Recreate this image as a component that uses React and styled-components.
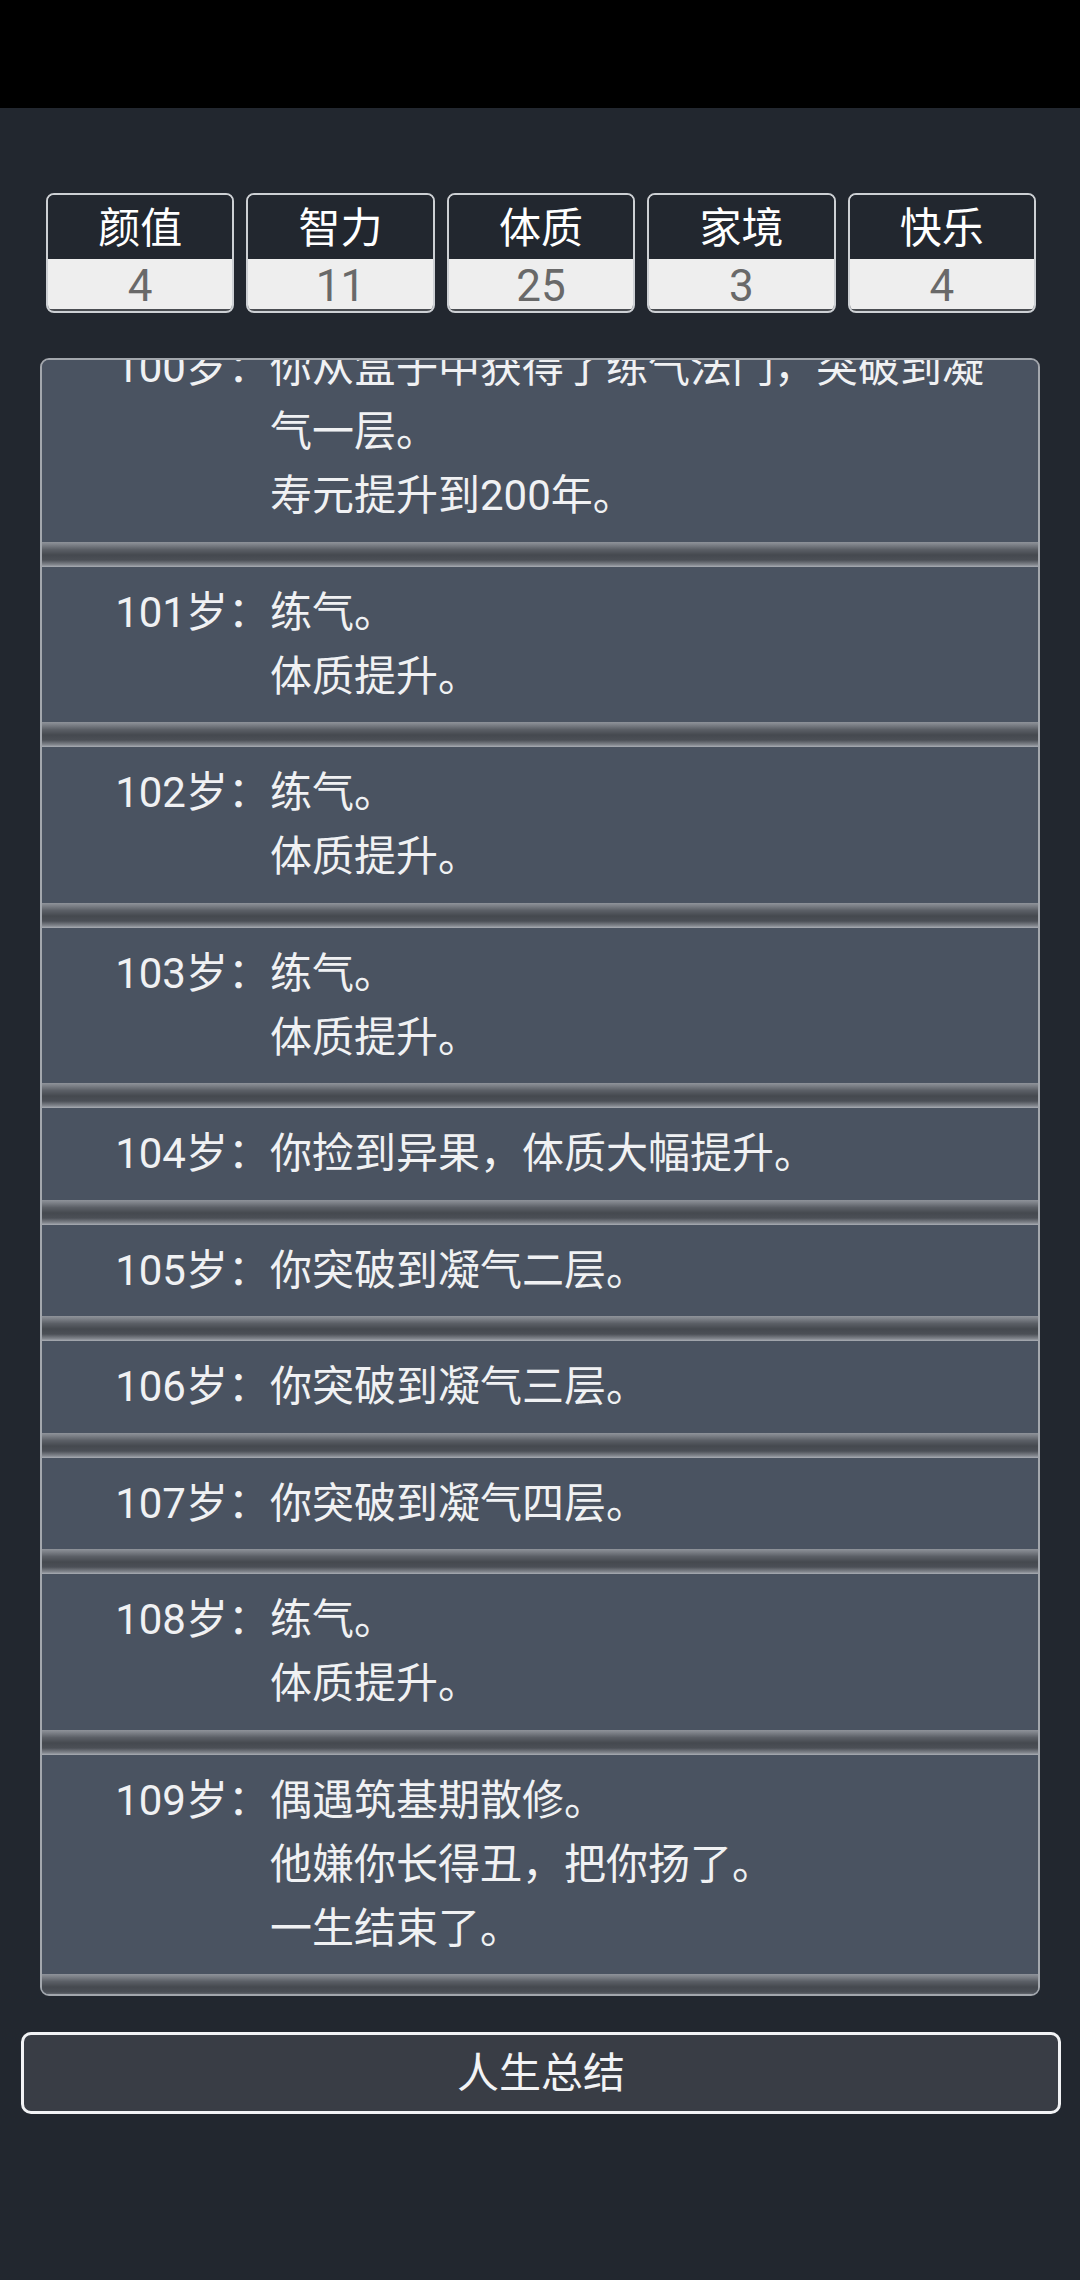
import React from "react";
import styled, { createGlobalStyle } from "styled-components";

const GlobalStyle = createGlobalStyle`
  html, body {
    margin: 0;
    padding: 0;
    background: #22272f;
  }
  * { box-sizing: border-box; }
`;

const Screen = styled.div`
  width: 1080px;
  min-height: 2280px;
  background: #22272f;
  font-family: Roboto, "Noto Sans CJK SC", sans-serif;
  color: #f0f1f3;
  display: flex;
  flex-direction: column;
`;

const StatusBar = styled.div`
  height: 108px;
  background: #000;
  flex-shrink: 0;
`;

const StatsRow = styled.ul`
  list-style: none;
  margin: 85px 0 0;
  padding: 0 44px 0 46px;
  display: grid;
  grid-template-columns: repeat(5, 1fr);
  gap: 12px;
`;

const StatCard = styled.li`
  border: 2px solid #cdd0d4;
  border-radius: 8px;
  overflow: hidden;
  display: flex;
  flex-direction: column;
`;

const StatLabel = styled.div`
  height: 64px;
  padding-top: 4px;
  line-height: 60px;
  text-align: center;
  font-size: 42px;
  color: #ffffff;
  background: #22272f;
`;

const StatValue = styled.div`
  height: 52px;
  padding-top: 2px;
  line-height: 50px;
  text-align: center;
  font-size: 44px;
  color: #696969;
  background: #eeeeee;
  border-bottom: 2px solid #4a4d52;
`;

const Panel = styled.div`
  margin: 45px 40px 0;
  height: 1638px;
  border: 2px solid #a3a7ad;
  border-radius: 9px;
  background: #4a5361;
  overflow: hidden;
`;

const Trajectory = styled.ul`
  list-style: none;
  margin: -38px 0 0;
  padding: 0;
`;

const Entry = styled.li`
  background: #4a5361;
  &::after {
    content: "";
    display: block;
    height: 25px;
    background: linear-gradient(
      to bottom,
      #8f939a 0%,
      #7b7f86 12%,
      #5b5f66 30%,
      #45494f 52%,
      #4b4f56 72%,
      #7f838a 90%,
      #a9adb4 100%
    );
  }
`;

const EntryBody = styled.div`
  display: flex;
  align-items: flex-start;
  padding: 14px 30px 13.5px 0;
  font-size: 42px;
  line-height: 64px;
`;

const Age = styled.span`
  flex-shrink: 0;
  width: 228px;
  text-align: right;
  white-space: nowrap;
`;

const Content = styled.div`
  flex: 1;
  min-width: 0;
`;

const Line = styled.div``;

const SummaryButton = styled.button`
  margin: 36px 19px 0 21px;
  height: 82px;
  border: 3px solid #f2f3f5;
  border-radius: 10px;
  background: #393d45;
  color: #f2f3f5;
  font-family: Roboto, "Noto Sans CJK SC", sans-serif;
  font-size: 42px;
  line-height: 1;
  padding: 2px 0 0;
  cursor: pointer;
`;

const stats = [
  { label: "颜值", value: 4 },
  { label: "智力", value: 11 },
  { label: "体质", value: 25 },
  { label: "家境", value: 3 },
  { label: "快乐", value: 4 },
];

const events = [
  { age: 100, lines: ["你从盒子中获得了练气法门，突破到凝气一层。", "寿元提升到200年。"] },
  { age: 101, lines: ["练气。", "体质提升。"] },
  { age: 102, lines: ["练气。", "体质提升。"] },
  { age: 103, lines: ["练气。", "体质提升。"] },
  { age: 104, lines: ["你捡到异果，体质大幅提升。"] },
  { age: 105, lines: ["你突破到凝气二层。"] },
  { age: 106, lines: ["你突破到凝气三层。"] },
  { age: 107, lines: ["你突破到凝气四层。"] },
  { age: 108, lines: ["练气。", "体质提升。"] },
  { age: 109, lines: ["偶遇筑基期散修。", "他嫌你长得丑，把你扬了。", "一生结束了。"] },
];

export default function App() {
  return (
    <>
      <GlobalStyle />
      <Screen>
        <StatusBar />
        <StatsRow>
          {stats.map((s) => (
            <StatCard key={s.label}>
              <StatLabel>{s.label}</StatLabel>
              <StatValue>{s.value}</StatValue>
            </StatCard>
          ))}
        </StatsRow>
        <Panel>
          <Trajectory>
            {events.map((e) => (
              <Entry key={e.age}>
                <EntryBody>
                  <Age>{e.age}岁：</Age>
                  <Content>
                    {e.lines.map((l, i) => (
                      <Line key={i}>{l}</Line>
                    ))}
                  </Content>
                </EntryBody>
              </Entry>
            ))}
          </Trajectory>
        </Panel>
        <SummaryButton>人生总结</SummaryButton>
      </Screen>
    </>
  );
}
